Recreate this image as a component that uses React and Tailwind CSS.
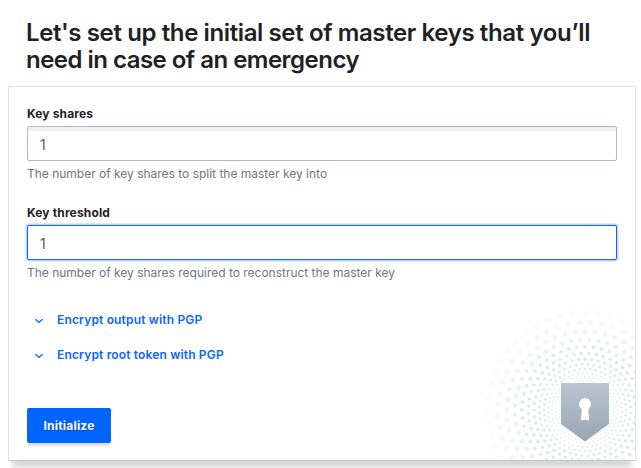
const RINGS = Array.from({ length: 15 }, (_, i) => ({
  radius: 97 * Math.pow(0.898, i),
  offset: i % 2 ? 0.5 : 0,
  opacity: [0.12, 0.22, 0.38, 0.55, 0.72, 0.85, 0.9, 0.85, 0.78, 0.68, 0.62, 0.6, 0.55, 0.5, 0.5][i],
}));

function Halo() {
  return (
    <svg className="pointer-events-none absolute right-0 bottom-0" width="150" height="155" viewBox="485 305 150 155" aria-hidden="true">
      <defs>
        <linearGradient id="shield" x1="0" y1="0" x2="0" y2="1">
          <stop offset="0" stopColor="#bac5cf" />
          <stop offset="1" stopColor="#98a5b0" />
        </linearGradient>
      </defs>
      {RINGS.map((ring, i) => (
        <g key={i} fill="#dce2e8" opacity={ring.opacity}>
          {Array.from({ length: 48 }, (_, n) => {
            const a = ((n + ring.offset) / 48) * Math.PI * 2;
            return (
              <circle key={n} cx={585 + ring.radius * Math.cos(a)} cy={410 + ring.radius * Math.sin(a)} r={ring.radius * 0.0315} />
            );
          })}
        </g>
      ))}
      <path d="M561 383H609V424L585 441.500L561 424Z" fill="url(#shield)" />
      <path d="M585 398.300a6 6 0 0 1 3.200 11L589.200 420H580.800L581.800 409.300a6 6 0 0 1 3.200-11Z" fill="#fff" />
    </svg>
  );
}

function Field({ label, help, focused }) {
  return (
    <div>
      <label className="block h-[18px] text-[12px] leading-[18px] font-bold tracking-[0.14px] text-[#1f2124]">{label}</label>
      <input
        defaultValue="1"
        className={
          "mt-[3px] block h-[35px] w-full rounded-[2px] border bg-white px-3 pt-px text-[14px] text-[#525761] outline-none " +
          (focused
            ? "border-[#1563ff] shadow-[0_0_0_1.5px_#bfd4ff]"
            : "border-[#b0bac8] shadow-[inset_0_4px_0_0_#f0f0f2]")
        }
      />
      <p className="mt-[4px] h-[18px] text-[12px] leading-[18px] tracking-[-0.01px] text-[#6f7682]">{help}</p>
    </div>
  );
}

function Toggle({ children }) {
  return (
    <button className="flex h-[35px] items-center text-[12px] font-semibold tracking-[0.16px] text-[#0a66ff]">
      <svg className="mt-[2px] ml-[7px] mr-[13px]" width="10" height="8" viewBox="0 0 10 8" fill="none" stroke="currentColor" strokeWidth="1.4">
        <path d="M1.500 2.200L5 5.400L8.500 2.200" />
      </svg>
      {children}
    </button>
  );
}

export default function App() {
  return (
    <main className="h-[468px] w-[641px] overflow-hidden bg-white pl-2 font-['Inter','Liberation_Sans',sans-serif]">
      <h1 className="h-[86px] pt-[19px] pl-[18px] text-[24px] leading-[27px] font-semibold text-[#1f2124]">
        <span className="block tracking-[-0.39px]">Let's set up the initial set of master keys that you’ll</span>
        <span className="block tracking-[-0.52px]">need in case of an emergency</span>
      </h1>
      <section className="relative h-[375px] w-[628px] border border-[#e2e3e5] border-b-[#c4c6c8] bg-white px-[18px] pt-[18px] shadow-[0_12px_5px_-7px_rgba(0,0,0,0.09),0_11px_4px_-3px_rgba(0,0,0,0.08)]">
        <Halo />
        <div className="flex flex-col gap-[21px]">
          <Field label="Key shares" help="The number of key shares to split the master key into" />
          <Field label="Key threshold" help="The number of key shares required to reconstruct the master key" focused />
        </div>
        <div className="mt-[20px] flex flex-col items-start">
          <Toggle>Encrypt output with PGP</Toggle>
          <Toggle>Encrypt root token with PGP</Toggle>
        </div>
        <button className="mt-[36px] h-[35px] w-[84px] rounded-[2px] bg-[#0064ff] pt-px text-[12px] font-bold tracking-[0.22px] text-white shadow-[0_4px_1px_-1.500px_#e0e1e4] [text-shadow:0_1px_1px_#004bc0]">
          Initialize
        </button>
      </section>
    </main>
  );
}
